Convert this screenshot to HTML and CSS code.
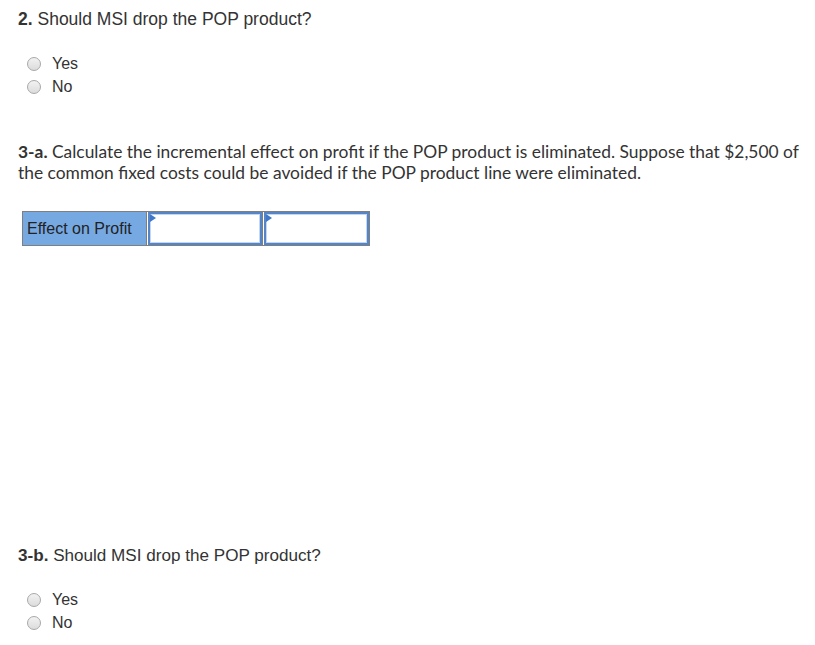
FILE: index.html
```html
<!DOCTYPE html>
<html>
<head>
<meta charset="utf-8">
<link rel="stylesheet" href="styles.css">
</head>
<body>
<div class="page">
  <section class="q q1">
    <p class="title"><b>2.</b> Should MSI drop the POP product?</p>
    <ul class="opts">
      <li><span class="radio"></span>Yes</li>
      <li><span class="radio"></span>No</li>
    </ul>
  </section>
  <section class="q q3a">
    <p class="para"><b>3-a.</b> Calculate the incremental effect on profit if the POP product is eliminated. Suppose that $2,500 of the common fixed costs could be avoided if the POP product line were eliminated.</p>
    <table class="grid">
      <tr>
        <td class="label">Effect on Profit</td>
        <td class="cell"><div class="inp"><span class="flag"></span></div></td>
        <td class="cell"><div class="inp"><span class="flag"></span></div></td>
      </tr>
    </table>
  </section>
  <section class="q q3b">
    <p class="title"><b>3-b.</b> Should MSI drop the POP product?</p>
    <ul class="opts">
      <li><span class="radio"></span>Yes</li>
      <li><span class="radio"></span>No</li>
    </ul>
  </section>
</div>
</body>
</html>
```
FILE: styles.css
```css
html, body { margin: 0; padding: 0; background: #fff; }
body { font-family: "Liberation Sans", Arial, sans-serif; color: #333; font-size: 16px; }
.page { padding: 9px 0 0 18px; }
.title { margin: 0; line-height: 20px; font-size: 17.5px; }
.q3b .title { font-size: 17.1px; }
.title b { font-weight: bold; }
.opts { list-style: none; margin: 0; padding: 0 0 0 9px; }
.q1 .opts { margin-top: 23px; }
.q3b .opts { margin-top: 22px; }
.opts li { display: flex; align-items: center; height: 23px; line-height: 23px; }
.radio {
  width: 14px; height: 14px; border-radius: 50%;
  border: 1px solid #a8a8a8;
  background: linear-gradient(#f2f2f2, #dcdcdc);
  box-sizing: border-box; margin-right: 11px;
}
.q3a { margin-top: 43px; }
.para { margin: 0; font-family: "Lato", "Open Sans", sans-serif; font-size: 17.4px; line-height: 21px; width: 790px; }
.para b { font-weight: bold; }
.grid { margin: 28px 0 0 4px; border-collapse: collapse; }
.grid td { border: 1px solid #7f7f7f; padding: 0; height: 33px; }
.label { background: #76a9e2; width: 119px; padding: 0 0 0 4px !important; font-family: "Liberation Sans", Arial, sans-serif; font-size: 16px; color: #222; }
.cell { background: #fff; }
.inp {
  position: relative; box-sizing: border-box; height: 33px; margin-left: 1px;
  border: 2px solid #5585c6; box-shadow: inset 0 0 0 1px #c3d6f2;
}
.cell:nth-child(2) .inp { width: 114px; }
.cell:nth-child(3) .inp { width: 105px; }
.flag {
  position: absolute; left: 0; top: 0; width: 0; height: 0;
  border-top: 4px solid transparent; border-bottom: 4px solid transparent;
  border-left: 6px solid #3f78c8;
}
.q3b { margin-top: 300px; }
```
